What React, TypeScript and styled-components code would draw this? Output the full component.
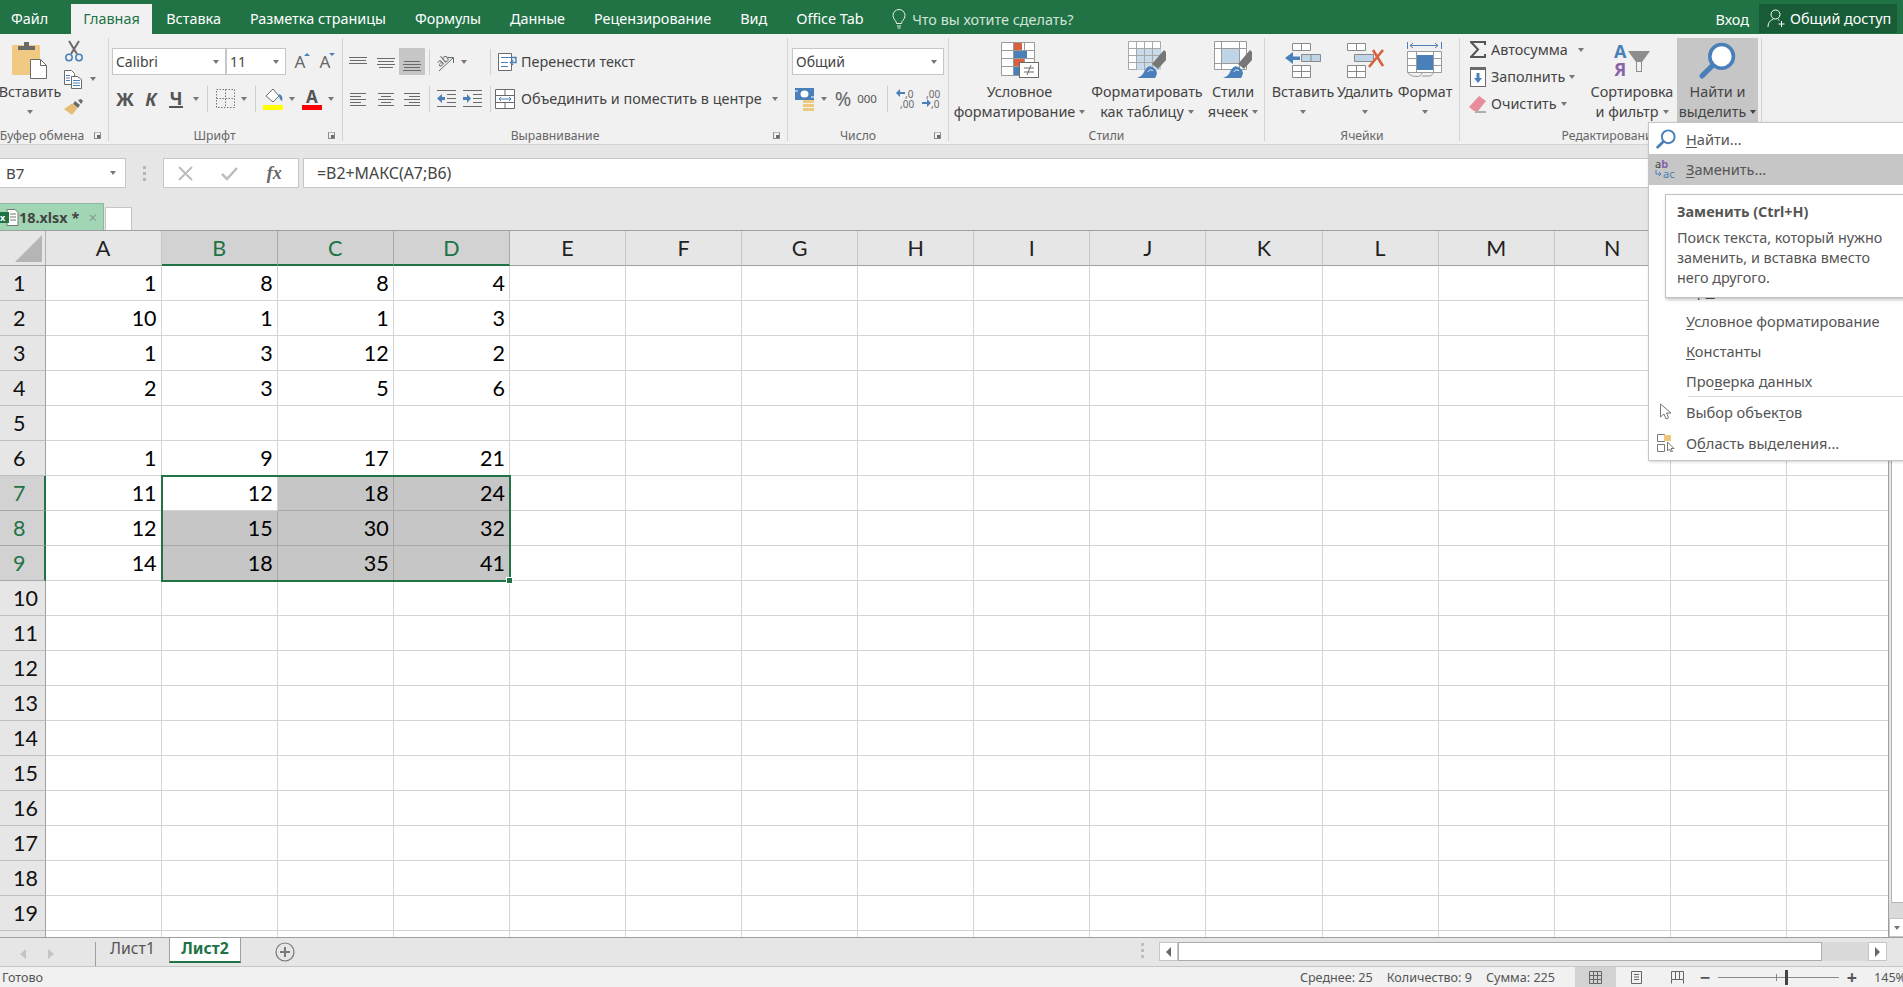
import React from 'react';
import styled, { createGlobalStyle } from 'styled-components';

const UI_FONT = '"Noto Sans", "Open Sans", sans-serif';
const CELL_FONT = 'Lato, "Noto Sans", sans-serif';
const GREEN = '#217346';
const GRAY = '#6a6a6a';
const BLUE = '#4a80b9';
const PALE = '#c0d4e8';
const RED = '#d8603f';
const COL_W = 116.1;
const ROW_W = 45.5;
const ROW_H = 35;

const GlobalStyle = createGlobalStyle`
  html, body {
    margin: 0;
    padding: 0;
    overflow: hidden;
    background: #fff;
  }
`;

const Window = styled.div`
  position: relative;
  width: 1903px;
  height: 987px;
  overflow: hidden;
  display: flex;
  flex-direction: column;
  font-family: ${UI_FONT};
  font-size: 14.4px;
  color: #444;
`;

/* top green strip */
const TitleBar = styled.div`
  height: 34px;
  flex: none;
  background: ${GREEN};
  display: flex;
  align-items: flex-end;
  color: #fff;
`;

const MenuTab = styled.div<{ $active?: boolean; $first?: boolean }>`
  height: 30px;
  line-height: 29px;
  padding: ${(p) => (p.$first ? '0 23px 0 11px' : p.$active ? '0 12px' : '0 14.5px')};
  background: ${(p) => (p.$active ? '#f1f1f1' : 'transparent')};
  color: ${(p) => (p.$active ? GREEN : '#fff')};
`;

const TellMe = styled.div`
  display: flex;
  align-items: center;
  gap: 6px;
  height: 30px;
  margin-left: 14px;
  color: #d3e3da;
`;

const TitleRight = styled.div`
  margin-left: auto;
  display: flex;
  align-items: flex-end;
  padding-right: 6px;
`;

const SignIn = styled.div`
  height: 29px;
  line-height: 30px;
  margin-right: 10px;
`;

const ShareButton = styled.div`
  width: 138px;
  height: 29px;
  margin-bottom: 1px;
  background: #185c37;
  display: flex;
  align-items: center;
  gap: 4px;
  padding-left: 8px;
  box-sizing: border-box;
`;

/* ribbon */
const Ribbon = styled.div`
  height: 111px;
  flex: none;
  box-sizing: border-box;
  background: #f1f1f1;
  border-bottom: 1px solid #d4d4d4;
  padding-top: 4px;
  display: flex;
  align-items: flex-start;
`;

const Group = styled.div<{ $w: number }>`
  width: ${(p) => p.$w}px;
  height: 103px;
  flex: none;
  box-sizing: border-box;
  border-right: 1px solid #d4d4d4;
  display: flex;
  flex-direction: column;
  position: relative;
`;

const GroupBody = styled.div<{ $pad?: number }>`
  height: 86px;
  display: flex;
  padding-left: ${(p) => p.$pad ?? 0}px;
`;

const GroupLabel = styled.div<{ $shift?: number }>`
  height: 17px;
  line-height: 24px;
  text-align: center;
  font-size: 12.2px;
  color: #666;
  white-space: nowrap;
  margin-left: ${(p) => p.$shift ?? 0}px;
`;

const Launcher = styled.div`
  position: absolute;
  right: 7px;
  bottom: 2px;
  width: 7px;
  height: 7px;
  border: 1px solid #8a8a8a;
  border-top-color: #b8b8b8;
  box-sizing: border-box;

  &::after {
    content: '';
    position: absolute;
    right: 0;
    bottom: 0;
    width: 3px;
    height: 3px;
    background: #6a6a6a;
  }
`;

const ToolStack = styled.div`
  display: flex;
  flex-direction: column;
  gap: 10px;
  padding-top: 10px;
`;

const ToolRow = styled.div`
  height: 27px;
  display: flex;
  align-items: center;
`;

const Slot = styled.div<{ $w: number; $on?: boolean }>`
  width: ${(p) => p.$w}px;
  height: 27px;
  flex: none;
  display: flex;
  align-items: center;
  justify-content: center;
  background: ${(p) => (p.$on ? '#c6c6c6' : 'transparent')};
`;

const Caret = styled.span<{ $dark?: boolean; $left?: number }>`
  display: inline-block;
  width: 0;
  height: 0;
  flex: none;
  margin-left: ${(p) => p.$left ?? 0}px;
  border-left: 3.5px solid transparent;
  border-right: 3.5px solid transparent;
  border-top: 4px solid ${(p) => (p.$dark ? '#444' : '#777')};
`;

const VRule = styled.div<{ $l: number; $r: number }>`
  width: 1px;
  height: 26px;
  flex: none;
  background: #d0d0d0;
  margin: 0 ${(p) => p.$r}px 0 ${(p) => p.$l}px;
`;

const Select = styled.div<{ $w: number }>`
  width: ${(p) => p.$w}px;
  height: 27px;
  flex: none;
  box-sizing: border-box;
  background: #fff;
  border: 1px solid #c6c6c6;
  display: flex;
  align-items: center;
  justify-content: space-between;
  padding: 0 6px 0 3px;
  font-size: 14px;
`;

const FontMark = styled.span<{ $italic?: boolean; $under?: boolean }>`
  font-weight: 700;
  font-size: 18px;
  font-style: ${(p) => (p.$italic ? 'italic' : 'normal')};
  color: #555;
  border-bottom: ${(p) => (p.$under ? '2px solid #555' : 'none')};
  line-height: 16px;
  padding: 0 1px;
`;

const GrowMark = styled.span`
  position: relative;
  font-size: 17px;
  color: #666;
  line-height: 20px;
`;

const PercentMark = styled.span`
  font-size: 20px;
  color: #666;
`;

const ThousandsMark = styled.span`
  font-size: 11.5px;
  color: #555;
`;

const GrowArrow = styled.span<{ $down?: boolean }>`
  position: absolute;
  top: 1px;
  right: -5px;
  width: 0;
  height: 0;
  border-left: 3px solid transparent;
  border-right: 3px solid transparent;
  border-top: ${(p) => (p.$down ? `3px solid ${BLUE}` : 'none')};
  border-bottom: ${(p) => (p.$down ? 'none' : `3px solid ${BLUE}`)};
`;

const ColorMark = styled.span<{ $bar: string }>`
  width: 20px;
  display: block;
  text-align: center;
  font-size: 17px;
  font-weight: 700;
  color: #555;
  line-height: 17px;
  border-bottom: 5px solid ${(p) => p.$bar};
`;

const TextTool = styled.div<{ $pad?: number }>`
  display: flex;
  align-items: center;
  gap: 3px;
  white-space: nowrap;
  padding-left: ${(p) => p.$pad ?? 0}px;
`;

const BigButton = styled.div<{ $w: number; $on?: boolean }>`
  width: ${(p) => p.$w}px;
  height: 84px;
  flex: none;
  display: flex;
  flex-direction: column;
  align-items: center;
  background: ${(p) => (p.$on ? '#c6c6c6' : 'transparent')};
  white-space: nowrap;
`;

const BigIcon = styled.div`
  height: 45px;
  display: flex;
  align-items: center;
  justify-content: center;
`;

const BigLine = styled.div`
  height: 20px;
  line-height: 20px;
  display: flex;
  align-items: center;
  gap: 4px;
`;

const SideColumn = styled.div`
  width: 42px;
  flex: none;
  margin-left: 4px;
  display: flex;
  flex-direction: column;
  padding-top: 1px;
  gap: 4px;
`;

const SideTool = styled.div`
  height: 24px;
  display: flex;
  align-items: center;
  gap: 8px;
`;

const EditColumn = styled.div`
  width: 127px;
  flex: none;
  display: flex;
  flex-direction: column;
  margin-top: -2px;
  padding-left: 9px;
  box-sizing: border-box;
`;

const EditRow = styled.div`
  height: 27px;
  display: flex;
  align-items: center;
  gap: 4px;
  white-space: nowrap;
`;

const EditIcon = styled.span`
  width: 18px;
  display: flex;
  justify-content: center;
`;

/* formula row */
const FormulaBar = styled.div`
  height: 58px;
  flex: none;
  box-sizing: border-box;
  background: #e6e6e6;
  padding-top: 13px;
  display: flex;
  align-items: flex-start;
`;

const NameBox = styled.div`
  width: 127px;
  height: 30px;
  margin-left: -1px;
  flex: none;
  box-sizing: border-box;
  background: #fff;
  border: 1px solid #c6c6c6;
  display: flex;
  align-items: center;
  justify-content: space-between;
  padding: 0 9px 0 6px;
  font-size: 15px;
`;

const GripDots = styled.div`
  width: 37px;
  height: 30px;
  flex: none;
  display: flex;
  flex-direction: column;
  align-items: center;
  justify-content: center;
  gap: 3px;

  span {
    width: 3px;
    height: 3px;
    background: #b5b5b5;
  }
`;

const FormulaButtons = styled.div`
  width: 136px;
  height: 30px;
  flex: none;
  box-sizing: border-box;
  background: #fff;
  border: 1px solid #c6c6c6;
  display: flex;
  align-items: center;
  justify-content: space-around;
  padding: 0 2px 0 0;
`;

const FxMark = styled.span`
  font-family: 'Liberation Serif', serif;
  font-style: italic;
  font-weight: 700;
  font-size: 18px;
  color: #666;
`;

const FormulaInput = styled.div`
  flex: 1;
  height: 30px;
  margin-left: 4px;
  box-sizing: border-box;
  background: #fff;
  border: 1px solid #c6c6c6;
  border-right: 0;
  line-height: 28px;
  padding-left: 13px;
  font-size: 15.9px;
`;

/* workbook tabs */
const BookBar = styled.div`
  height: 28px;
  flex: none;
  box-sizing: border-box;
  background: #e6e6e6;
  border-bottom: 1px solid #9f9f9f;
  display: flex;
  align-items: flex-end;
`;

const BookTab = styled.div`
  width: 104px;
  height: 27px;
  flex: none;
  box-sizing: border-box;
  background: #a0d6b4;
  border: 1px solid #8fb8a0;
  border-left: 0;
  border-bottom: 0;
  display: flex;
  align-items: center;
  overflow: hidden;
  font-weight: 700;
  font-size: 14.4px;
  color: #444;
`;

const BookClose = styled.span`
  margin-left: auto;
  margin-right: 6px;
  font-weight: 400;
  font-size: 15px;
  color: #8c9a91;
`;

const NewBook = styled.div`
  width: 27px;
  height: 23px;
  margin-left: 1px;
  flex: none;
  box-sizing: border-box;
  background: #fff;
  border: 1px solid #c6c6c6;
  border-bottom: 0;
`;

/* sheet */
const SheetArea = styled.div`
  flex: 1;
  min-height: 0;
  display: flex;
`;

const GridViewport = styled.div`
  position: relative;
  flex: 1;
  overflow: hidden;
`;

const SheetGrid = styled.div`
  display: grid;
  grid-template-columns: ${ROW_W}px repeat(16, ${COL_W}px);
  grid-auto-rows: ${ROW_H}px;
`;

const Corner = styled.div`
  background: #e6e6e6;
  border-right: 1px solid #b0b0b0;
  border-bottom: 1px solid #9f9f9f;
  box-sizing: border-box;
  position: relative;

  &::after {
    content: '';
    position: absolute;
    right: 3px;
    bottom: 3px;
    width: 0;
    height: 0;
    border-left: 27px solid transparent;
    border-bottom: 27px solid #b5b5b5;
  }
`;

const ColHead = styled.div<{ $on: boolean }>`
  box-sizing: border-box;
  background: ${(p) => (p.$on ? '#d2d2d2' : '#e6e6e6')};
  border-right: 1px solid ${(p) => (p.$on ? '#a8a8a8' : '#c6c6c6')};
  border-bottom: ${(p) => (p.$on ? `2px solid ${GREEN}` : '1px solid #9f9f9f')};
  color: ${(p) => (p.$on ? GREEN : '#222')};
  font-family: ${CELL_FONT};
  font-size: 21.5px;
  display: flex;
  align-items: center;
  justify-content: center;
`;

const RowHead = styled.div<{ $on: boolean }>`
  box-sizing: border-box;
  background: ${(p) => (p.$on ? '#d2d2d2' : '#e6e6e6')};
  border-right: ${(p) => (p.$on ? `2px solid ${GREEN}` : '1px solid #9f9f9f')};
  border-bottom: 1px solid ${(p) => (p.$on ? '#a8a8a8' : '#c0c0c0')};
  color: ${(p) => (p.$on ? GREEN : '#111')};
  font-family: ${CELL_FONT};
  font-size: 21.5px;
  display: flex;
  align-items: center;
  padding-left: 13px;
`;

const Cell = styled.div<{ $fill: boolean }>`
  box-sizing: border-box;
  background: ${(p) => (p.$fill ? '#c6c6c6' : '#fff')};
  border-right: 1px solid ${(p) => (p.$fill ? '#a8a8a8' : '#d4d4d4')};
  border-bottom: 1px solid ${(p) => (p.$fill ? '#a8a8a8' : '#d4d4d4')};
  color: #000;
  font-family: ${CELL_FONT};
  font-size: 21.5px;
  display: flex;
  align-items: center;
  justify-content: flex-end;
  padding-right: 4px;
`;

const Selection = styled.div`
  position: absolute;
  left: ${ROW_W + COL_W - 1}px;
  top: ${ROW_H * 7 - 1}px;
  width: ${COL_W * 3 + 2}px;
  height: ${ROW_H * 3 + 2}px;
  box-sizing: border-box;
  border: 2px solid ${GREEN};
  pointer-events: none;

  &::after {
    content: '';
    position: absolute;
    right: -4px;
    bottom: -4px;
    width: 5px;
    height: 5px;
    background: ${GREEN};
    border: 1px solid #fff;
  }
`;

const VScroll = styled.div`
  width: 15px;
  flex: none;
  display: flex;
  flex-direction: column;
  background: #e6e6e6;
  border-left: 1px solid #9f9f9f;
  box-sizing: border-box;
`;

const VThumb = styled.div`
  flex: 1;
  margin: 0 0 0 2px;
  background: #fff;
  border: 1px solid #b5b5b5;
  border-right: 0;
`;

const VTrack = styled.div`
  height: 15px;
  background: #dadada;
`;

const VButton = styled.div`
  height: 17px;
  background: #fff;
  border: 1px solid #c6c6c6;
  border-right: 0;
  display: flex;
  align-items: center;
  justify-content: center;
`;

/* sheet tabs */
const SheetBar = styled.div`
  height: 29px;
  flex: none;
  box-sizing: border-box;
  background: #e6e6e6;
  border-top: 1px solid #9f9f9f;
  display: flex;
  align-items: flex-start;
`;

const NavArrows = styled.div`
  width: 96px;
  height: 24px;
  margin-top: 4px;
  box-sizing: border-box;
  border-right: 1px solid #9f9f9f;
  flex: none;
  display: flex;
  align-items: center;
  gap: 22px;
  padding-left: 20px;
`;

const NavArrow = styled.span<{ $right?: boolean }>`
  width: 0;
  height: 0;
  border-top: 5px solid transparent;
  border-bottom: 5px solid transparent;
  border-left: ${(p) => (p.$right ? '6px solid #c4c4c4' : 'none')};
  border-right: ${(p) => (p.$right ? 'none' : '6px solid #c4c4c4')};
`;

const SheetTab = styled.div<{ $active?: boolean }>`
  height: 25px;
  line-height: 21px;
  width: ${(p) => (p.$active ? 72 : 73)}px;
  flex: none;
  box-sizing: border-box;
  text-align: center;
  font-size: 15.8px;
  font-weight: ${(p) => (p.$active ? 700 : 400)};
  color: ${(p) => (p.$active ? GREEN : '#555')};
  background: ${(p) => (p.$active ? '#fff' : 'transparent')};
  border-left: ${(p) => (p.$active ? '1px solid #9f9f9f' : 'none')};
  border-right: ${(p) => (p.$active ? '1px solid #9f9f9f' : 'none')};
  border-bottom: ${(p) => (p.$active ? `2px solid ${GREEN}` : 'none')};
`;

const AddSheet = styled.div`
  width: 20px;
  height: 20px;
  margin: 4px 0 0 34px;
  flex: none;
  display: flex;
`;

const ScrollDots = styled.div`
  margin: 0 9px 0 839px;
  width: 16px;
  height: 24px;
  flex: none;
  display: flex;
  flex-direction: column;
  align-items: center;
  justify-content: center;
  gap: 3px;

  span {
    width: 3px;
    height: 3px;
    background: #bdbdbd;
  }
`;

const HScroll = styled.div`
  width: 728px;
  height: 19px;
  margin: 4px 0 0 0;
  flex: none;
  display: flex;
  background: #d9d9d9;
`;

const HButton = styled.div<{ $end?: boolean }>`
  width: 19px;
  flex: none;
  box-sizing: border-box;
  background: #fff;
  border: 1px solid #c6c6c6;
  display: flex;
  align-items: center;
  justify-content: center;
  margin-left: ${(p) => (p.$end ? 'auto' : 0)};
`;

const HThumb = styled.div`
  width: 644px;
  flex: none;
  box-sizing: border-box;
  background: #fff;
  border: 1px solid #ababab;
`;

const ScrollArrow = styled.span<{ $right?: boolean }>`
  width: 0;
  height: 0;
  border-top: 5px solid transparent;
  border-bottom: 5px solid transparent;
  border-left: ${(p) => (p.$right ? '5px solid #666' : 'none')};
  border-right: ${(p) => (p.$right ? 'none' : '5px solid #666')};
`;

/* status bar */
const StatusBar = styled.div`
  height: 21px;
  flex: none;
  box-sizing: border-box;
  background: #f1f1f1;
  border-top: 1px solid #c6c6c6;
  display: flex;
  align-items: center;
  font-size: 12.6px;
  color: #555;
  white-space: nowrap;
`;

const StatusText = styled.div`
  padding: 1px 0 0 2px;
`;

const StatusStats = styled.div`
  margin-left: auto;
  display: flex;
  gap: 14px;
  margin-right: 20px;
  padding-top: 1px;
`;

const StatusRight = styled.div`
  width: 328px;
  height: 20px;
  flex: none;
  display: flex;
  align-items: center;
  overflow: hidden;
`;

const ViewButton = styled.div<{ $on?: boolean }>`
  width: 41px;
  height: 20px;
  flex: none;
  display: flex;
  align-items: center;
  justify-content: center;
  background: ${(p) => (p.$on ? '#d2d2d2' : 'transparent')};
`;

const ZoomTrack = styled.div`
  position: relative;
  width: 121px;
  height: 1px;
  margin: 0 6px;
  background: #8a8a8a;
  flex: none;
`;

const ZoomMark = styled.span<{ $thumb?: boolean; $x: number }>`
  position: absolute;
  left: ${(p) => p.$x}px;
  top: ${(p) => (p.$thumb ? -7 : -3)}px;
  width: ${(p) => (p.$thumb ? 3 : 1)}px;
  height: ${(p) => (p.$thumb ? 15 : 7)}px;
  background: ${(p) => (p.$thumb ? '#444' : '#8a8a8a')};
`;

const ZoomSign = styled.span`
  width: 14px;
  flex: none;
  font-size: 18px;
  line-height: 18px;
  text-align: center;
  color: #555;
  font-weight: 700;
`;

const ZoomValue = styled.span`
  margin-left: 15px;
`;

/* open menu and its hint */
const FindMenu = styled.div`
  position: absolute;
  left: 1648px;
  top: 122px;
  width: 300px;
  box-sizing: border-box;
  padding: 1px 0 2px;
  background: #fff;
  border: 1px solid #c6c6c6;
  box-shadow: 1px 1px 3px rgba(0, 0, 0, 0.18);
`;

const MenuRow = styled.div<{ $on?: boolean }>`
  height: 30.25px;
  display: flex;
  align-items: center;
  background: ${(p) => (p.$on ? '#c6c6c6' : 'transparent')};
  white-space: nowrap;
  font-size: 14.6px;
  color: #555;
`;

const MenuIcon = styled.span`
  width: 37px;
  flex: none;
  display: flex;
  justify-content: center;
  padding-right: 4px;
  box-sizing: border-box;
`;

const Key = styled.span`
  text-decoration: underline;
  text-underline-offset: 2px;
`;

const MenuRule = styled.div`
  height: 1px;
  margin-left: 39px;
  background: #d8d8d8;
`;

const Hint = styled.div`
  position: absolute;
  left: 1665px;
  top: 194px;
  width: 300px;
  height: 104px;
  box-sizing: border-box;
  background: #fff;
  border: 1px solid #c0c0c0;
  box-shadow: 1px 2px 3px rgba(0, 0, 0, 0.22);
  padding: 7px 0 0 11px;
`;

const HintTitle = styled.div`
  font-weight: 700;
  font-size: 14.4px;
  line-height: 20px;
  color: #555;
  margin-bottom: 6px;
`;

const HintLine = styled.div`
  font-size: 14.4px;
  line-height: 20px;
  color: #555;
`;

/* drawings */
const PasteIcon = () => (
  <svg width="36" height="39" viewBox="0 0 36 39">
    <rect x="0" y="4" width="28" height="30" rx="1" fill="#f0c983" />
    <path d="M6 9V5h6V1h5v4h6v4z" fill={GRAY} />
    <path d="M18.5 18.5h10l6 6v13h-16z" fill="#fff" stroke={GRAY} />
    <path d="M28.5 18.5v6h6" fill="none" stroke={GRAY} />
  </svg>
);

const CutIcon = () => (
  <svg width="20" height="22" viewBox="0 0 20 22">
    <path d="M5 1l8 13M15 1L7 14" stroke={GRAY} strokeWidth="2" fill="none" />
    <circle cx="5" cy="17.5" r="3.2" fill="none" stroke={BLUE} strokeWidth="1.5" />
    <circle cx="15" cy="17.5" r="3.2" fill="none" stroke={BLUE} strokeWidth="1.5" />
  </svg>
);

const CopyIcon = () => (
  <svg width="18" height="19" viewBox="0 0 18 19">
    <path d="M.5.5h7l3 3v11H.5z" fill="#fff" stroke={GRAY} />
    <path d="M7.5 6.5h6l4 3v9h-10z" fill="#fff" stroke={GRAY} />
    <path d="M9 10.5h7M9 13h7M9 15.5h7" stroke={BLUE} />
    <path d="M2 5.5h4M2 8h4M2 10.5h4" stroke={BLUE} />
  </svg>
);

const BrushIcon = () => (
  <svg width="19" height="17" viewBox="0 0 19 17">
    <path d="M11 2l5 4-2 3-5-4z" fill={GRAY} />
    <path d="M14 1l3-1 2 2-2 3z" fill={GRAY} />
    <path d="M8 4.5l5.5 4.500L8 16 0 10z" fill="#e7bd74" />
  </svg>
);

const BorderIcon = () => (
  <svg width="19" height="19" viewBox="0 0 19 19">
    <path d="M.5.5h18v18H.5zM9.5.5v18M.5 9.500h18" fill="none" stroke="#777" strokeDasharray="1.5 1.5" />
  </svg>
);

const FillIcon = () => (
  <svg width="21" height="23" viewBox="0 0 21 23">
    <path d="M3 9l7-7 6 7-6 6z" fill="#fff" stroke={GRAY} />
    <path d="M16 7c3 1 4 4 3 7-2-1-3-3-3-7z" fill={BLUE} />
    <rect x="0" y="18" width="20" height="5" fill="#ffff00" />
  </svg>
);

const Lines = ({ rows, w = 18 }: { rows: [number, number, number][]; w?: number }) => (
  <svg width={w} height="18" viewBox={`0 0 ${w} 18`}>
    {rows.map(([a, b, y]) => (
      <line key={`${a}-${y}`} x1={a} x2={b} y1={y + 0.5} y2={y + 0.5} stroke={GRAY} />
    ))}
  </svg>
);

const OrientIcon = () => (
  <svg width="18" height="20" viewBox="0 0 18 20">
    <text x="0" y="13" fontFamily={UI_FONT} fontSize="11" fill={GRAY} transform="rotate(-40 5 10)">ab</text>
    <path d="M2 19L16 6M11 5.5h5.5V11" fill="none" stroke={GRAY} />
  </svg>
);

const WrapIcon = () => (
  <svg width="20" height="20" viewBox="0 0 20 20">
    <path d="M.5 1.5h13v17H.5z" fill="#fff" stroke={GRAY} />
    <path d="M3 5.5h13M3 10.5h7M3 14.5h7" stroke={BLUE} />
    <path d="M14 5.5h4v5h-5M15 8l-2.5 2.5L15 13" fill="none" stroke={BLUE} strokeWidth="1.4" />
  </svg>
);

const IndentIcon = ({ flip }: { flip?: boolean }) => (
  <svg width="20" height="19" viewBox="0 0 20 19">
    <path d="M1 1.5h19M11 5.5h9M11 9.5h9M11 13.5h9M1 17.5h19" stroke={GRAY} />
    {flip
      ? <path d="M1 8h4V5l4 4.5L5 14v-3H1z" fill={BLUE} />
      : <path d="M9 8H6V5L1 9.5 6 14v-3h3z" fill={BLUE} />}
  </svg>
);

const MergeIcon = () => (
  <svg width="20" height="20" viewBox="0 0 20 20">
    <path d="M.5.5h19v19H.5zM.5 6.5h19M.5 13.5h19M10 .5v6M10 13.5v6" fill="#fff" stroke={GRAY} />
    <rect x="1" y="7" width="18" height="6" fill="#fff" />
    <path d="M4 10h12M6 8l-2 2 2 2M14 8l2 2-2 2" fill="none" stroke={BLUE} />
  </svg>
);

const CurrencyIcon = () => (
  <svg width="21" height="24" viewBox="0 0 21 24">
    <rect x="0" y="1" width="19" height="12" fill={BLUE} />
    <ellipse cx="9.5" cy="7" rx="4" ry="3.5" fill="#fff" />
    <path d="M0 4h3M16 10h3" stroke="#fff" />
    <rect x="8" y="13" width="11" height="3" fill="#edc87e" />
    <rect x="8" y="17" width="11" height="3" fill="#edc87e" />
    <rect x="8" y="21" width="11" height="3" fill="#edc87e" />
  </svg>
);

const DecimalIcon = ({ more }: { more?: boolean }) => (
  <svg width="19" height="20" viewBox="0 0 19 20">
    <text x={more ? 4 : 9} y="9" fontFamily={UI_FONT} fontSize="10" fill={GRAY}>{more ? ',00' : ',0'}</text>
    <text x={more ? 9 : 4} y="19" fontFamily={UI_FONT} fontSize="10" fill={GRAY}>{more ? ',0' : ',00'}</text>
    {more
      ? <path d="M0 13h5v-3l4 4-4 4v-3H0z" fill={BLUE} />
      : <path d="M9 3H4V0L0 4l4 4V5h5z" fill={BLUE} />}
  </svg>
);

const CondIcon = () => (
  <svg width="38" height="36" viewBox="0 0 38 36">
    <path d="M.5.5h33v33H.5zM.5 8.5h33M.5 16.5h33M.5 24.5h33M12.5.5v33M23.5.5v33" fill="#fff" stroke="#9a9a9a" />
    <rect x="13" y="1" width="8" height="7" fill={RED} />
    <rect x="13" y="9" width="13" height="7" fill={BLUE} />
    <rect x="13" y="17" width="10" height="7" fill={RED} />
    <rect x="13" y="25" width="7" height="8" fill={BLUE} />
    <rect x="18.5" y="20.5" width="19" height="15" fill="#fff" stroke={GRAY} />
    <path d="M23 26h10M23 30h10M30 23l-4 10" stroke={GRAY} />
  </svg>
);

const TableBrushIcon = ({ cells }: { cells?: boolean }) => (
  <svg width="38" height="38" viewBox="0 0 38 38">
    {cells ? (
      <>
        <path d="M.5.5h32v28H.5zM.5 7.5h32M7.5.5v28M25.5.5v28M.5 22.5h32" fill="#fff" stroke="#9a9a9a" />
        <rect x="8" y="8" width="17" height="14" fill={PALE} />
      </>
    ) : (
      <>
        <path d="M.5.5h32v28H.5zM.5 7.5h32M.5 14.5h32M.5 21.5h32M8.5.5v28M16.5.5v28M24.5.5v28" fill="#fff" stroke="#a8a8a8" />
        <path d="M9 8h24v21H9z" fill={PALE} opacity="0.85" />
        <path d="M9 14.5h24M9 21.5h24M16.5 8v21M24.5 8v21" stroke="#a8a8a8" />
      </>
    )}
    <path d="M24 23l12-14 2 2v8l-8 9z" fill="#777" />
    <path d="M27 28c-6-6-9-1-11 3-1 3-4 5-7 6h18c2-3 3-6 0-9z" fill={BLUE} />
    <path d="M20 31c1-2 3-3 5-1" stroke="#fff" fill="none" />
  </svg>
);

const InsertIcon = () => (
  <svg width="37" height="35" viewBox="0 0 37 35">
    <path d="M7.5.5h18v7h-18zM16.5.5v7M7.5 22.5h18v12h-18zM16.5 22.5v12M7.5 28.5h18" fill="#fff" stroke="#8a8a8a" />
    <path d="M16.5 11.5h19v7h-19zM26 11.5v7" fill={PALE} stroke="#8a8a8a" />
    <path d="M15 13.5H8V9l-8 6 8 6v-4h7z" fill={BLUE} />
  </svg>
);

const DeleteIcon = () => (
  <svg width="37" height="35" viewBox="0 0 37 35">
    <path d="M.5.5h18v7H.5zM9.5.5v7M.5 22.5h18v12H.5zM9.5 22.5v12M.5 28.5h18" fill="#fff" stroke="#8a8a8a" />
    <path d="M7.5 11.5h19v7h-19z" fill={PALE} stroke="#8a8a8a" />
    <path d="M26 7l10 16M36 7L22 24" stroke={RED} strokeWidth="2.6" fill="none" />
  </svg>
);

const FormatIcon = () => (
  <svg width="36" height="36" viewBox="0 0 36 36">
    <path d="M.5 0v7M34.5 0v7M3 3.5h28M6 1L3 3.5 6 6M28 1l3 2.5L28 6" stroke={BLUE} fill="none" />
    <path d="M.5 9.5h34v21H.5zM.5 16.5h34M.5 23.5h34M9.5 9.5v21M26.5 9.5v21" fill="#fff" stroke="#9a9a9a" />
    <rect x="10" y="13" width="16" height="15" fill={BLUE} />
    <path d="M.5 30.5c3 4 7 4 11 4 3-1 3-3 4-4M15 34h8c2-1 3-2 4-3.5" fill="none" stroke="#9a9a9a" />
  </svg>
);

const SigmaIcon = () => (
  <svg width="16" height="17" viewBox="0 0 16 17">
    <path d="M15 4V1H1l7 7.5L1 16h14v-3" fill="none" stroke="#555" strokeWidth="2" />
  </svg>
);

const FillDownIcon = () => (
  <svg width="16" height="20" viewBox="0 0 16 20">
    <rect x=".5" y="1.5" width="15" height="18" fill="#fff" stroke={GRAY} />
    <rect x="0" y="0" width="16" height="3" fill={GRAY} />
    <path d="M6.5 6h3v5H12l-4 5-4-5h2.5z" fill={BLUE} />
  </svg>
);

const EraserIcon = () => (
  <svg width="18" height="18" viewBox="0 0 18 18">
    <path d="M10 1l7 5-8 10H5L0 12z" fill="#ea8d9b" />
    <path d="M6 17h11" stroke={GRAY} />
  </svg>
);

const SortIcon = () => (
  <svg width="38" height="37" viewBox="0 0 38 37">
    <text x="1" y="16" fontFamily={UI_FONT} fontSize="18" fontWeight="700" fill={BLUE}>A</text>
    <text x="1" y="34" fontFamily={UI_FONT} fontSize="18" fontWeight="700" fill="#8a63ab">Я</text>
    <path d="M15 9h22l-8 11v10h-6V20z" fill="#8d8d8d" />
    <path d="M24 20h4v9h-4z" fill="#f1f1f1" />
  </svg>
);

const Magnifier = ({ size }: { size: number }) => (
  <svg width={size} height={size} viewBox="0 0 36 36">
    <circle cx="22" cy="14" r="11.5" fill="#fff" stroke={BLUE} strokeWidth="3.5" />
    <path d="M13 23L3 33" stroke={BLUE} strokeWidth="5" strokeLinecap="round" />
  </svg>
);

const ReplaceIcon = () => (
  <svg width="22" height="20" viewBox="0 0 22 20">
    <text x="0" y="9" fontFamily={UI_FONT} fontSize="11" fill="#444">a<tspan fill="#8a63ab" fontWeight="700">b</tspan></text>
    <path d="M1 11v4h5M4 13l2 2-2 2" fill="none" stroke={BLUE} />
    <text x="8" y="19" fontFamily={UI_FONT} fontSize="11" fill={BLUE}>ac</text>
  </svg>
);

const PointerIcon = () => (
  <svg width="14" height="18" viewBox="0 0 14 18">
    <path d="M1.5 1v13l3.5-3 2 5 2.5-1-2-5h4.5z" fill="#fff" stroke="#777" />
  </svg>
);

const PaneIcon = () => (
  <svg width="18" height="18" viewBox="0 0 18 18">
    <path d="M.5.5h7v7h-7zM.5 10.5h7v7h-7z" fill="#fff" stroke="#777" />
    <rect x="7" y="1" width="7" height="6" fill="#edc87e" />
    <path d="M10.5 8v9l2-2 1.5 3 1.5-.5-1.5-3h3z" fill="#fff" stroke="#777" />
  </svg>
);

const BulbIcon = () => (
  <svg width="14" height="20" viewBox="0 0 14 20" fill="none" stroke="#e8f0ea">
    <path d="M4.5 14.5c0-3-3.5-4-3.5-8a6 6 0 0 1 12 0c0 4-3.5 5-3.5 8z" />
    <path d="M5 17h4M5.5 19h3" />
  </svg>
);

const ShareIcon = () => (
  <svg width="19" height="19" viewBox="0 0 19 19" fill="none" stroke="#fff">
    <circle cx="8.5" cy="5.5" r="4.5" />
    <path d="M1 18c0-5 3-7 5.5-8M11 10.5l1.5.8M14.5 12v6M11.5 15h6" />
  </svg>
);

const ExcelMark = () => (
  <svg width="19" height="19" viewBox="0 0 19 19">
    <path d="M7 1.5h8l3 3v13H7z" fill="#fff" stroke="#777" />
    <path d="M10 6h6M10 9h6M10 12h6" stroke="#777" />
    <rect x="-2" y="4" width="11" height="11" fill={GREEN} />
    <text x="0" y="13" fontFamily={UI_FONT} fontSize="9" fontWeight="700" fill="#fff">x</text>
  </svg>
);

const AddIcon = () => (
  <svg width="20" height="20" viewBox="0 0 20 20" fill="none" stroke="#777">
    <circle cx="10" cy="10" r="9" strokeWidth="1.2" />
    <path d="M10 5v10M5 10h10" strokeWidth="2" />
  </svg>
);

const CrossIcon = () => (
  <svg width="15" height="15" viewBox="0 0 15 15">
    <path d="M1 1l13 13M14 1L1 14" stroke="#bdbdbd" strokeWidth="2" />
  </svg>
);

const CheckIcon = () => (
  <svg width="17" height="15" viewBox="0 0 17 15">
    <path d="M1 8l5 5L16 2" stroke="#bdbdbd" strokeWidth="2.5" fill="none" />
  </svg>
);

const NormalViewIcon = () => (
  <svg width="13" height="13" viewBox="0 0 13 13">
    <path d="M.5.5h12v12H.5zM4.5.5v12M8.5.5v12M.5 4.5h12M.5 8.5h12" fill="none" stroke="#666" />
  </svg>
);

const PageViewIcon = () => (
  <svg width="11" height="13" viewBox="0 0 11 13">
    <path d="M.5.5h10v12H.5z" fill="none" stroke="#666" />
    <path d="M3 3.5h5M3 6h5M3 8.5h5" stroke="#666" />
  </svg>
);

const BreakViewIcon = () => (
  <svg width="13" height="13" viewBox="0 0 13 13">
    <path d="M.5.5h12v8H.5zM4.5.5v8M8.5.5v8M.5 8.5v4M12.5 8.5v4" fill="none" stroke="#666" />
  </svg>
);

const tabs = ['Вставка', 'Разметка страницы', 'Формулы', 'Данные', 'Рецензирование', 'Вид', 'Office Tab'];
const columns = 'ABCDEFGHIJKLMNOP'.split('');
const sheetData: number[][] = [
  [1, 8, 8, 4],
  [10, 1, 1, 3],
  [1, 3, 12, 2],
  [2, 3, 5, 6],
  [],
  [1, 9, 17, 21],
  [11, 12, 18, 24],
  [12, 15, 30, 32],
  [14, 18, 35, 41],
];

const App = () => (
  <Window>
    <GlobalStyle />
    <TitleBar>
      <MenuTab $first>Файл</MenuTab>
      <MenuTab $active>Главная</MenuTab>
      {tabs.map((t) => <MenuTab key={t}>{t}</MenuTab>)}
      <TellMe><BulbIcon />Что вы хотите сделать?</TellMe>
      <TitleRight>
        <SignIn>Вход</SignIn>
        <ShareButton><ShareIcon />Общий доступ</ShareButton>
      </TitleRight>
    </TitleBar>

    <Ribbon>
      <Group $w={109}>
        <GroupBody>
          <BigButton $w={60}>
            <BigIcon><PasteIcon /></BigIcon>
            <BigLine>Вставить</BigLine>
            <BigLine><Caret /></BigLine>
          </BigButton>
          <SideColumn>
            <SideTool><CutIcon /></SideTool>
            <SideTool><CopyIcon /><Caret /></SideTool>
            <SideTool><BrushIcon /></SideTool>
          </SideColumn>
        </GroupBody>
        <GroupLabel $shift={-24}>Буфер обмена</GroupLabel>
        <Launcher />
      </Group>

      <Group $w={234}>
        <GroupBody $pad={3}>
          <ToolStack>
            <ToolRow>
              <Select $w={114}>Calibri<Caret /></Select>
              <Select $w={60}>11<Caret /></Select>
              <Slot $w={28}><GrowMark>A<GrowArrow /></GrowMark></Slot>
              <Slot $w={22}><GrowMark>A<GrowArrow $down /></GrowMark></Slot>
            </ToolRow>
            <ToolRow>
              <Slot $w={26}><FontMark>Ж</FontMark></Slot>
              <Slot $w={26}><FontMark $italic>К</FontMark></Slot>
              <Slot $w={24}><FontMark $under>Ч</FontMark></Slot>
              <Slot $w={16}><Caret /></Slot>
              <VRule $l={3} $r={3} />
              <Slot $w={28}><BorderIcon /></Slot>
              <Slot $w={10}><Caret /></Slot>
              <VRule $l={6} $r={6} />
              <Slot $w={22}><FillIcon /></Slot>
              <Slot $w={16}><Caret /></Slot>
              <Slot $w={24}><ColorMark $bar="#ff0000">A</ColorMark></Slot>
              <Slot $w={14}><Caret /></Slot>
            </ToolRow>
          </ToolStack>
        </GroupBody>
        <GroupLabel $shift={-22}>Шрифт</GroupLabel>
        <Launcher />
      </Group>

      <Group $w={445}>
        <GroupBody>
          <ToolStack>
            <ToolRow>
              <Slot $w={30}><Lines rows={[[0, 18, 4], [1, 17, 7], [0, 18, 10]]} /></Slot>
              <Slot $w={26}><Lines rows={[[0, 18, 5], [1, 17, 8], [0, 18, 11], [2, 16, 14]]} /></Slot>
              <Slot $w={26} $on><Lines rows={[[1, 17, 8], [0, 18, 11], [1, 17, 14], [0, 18, 17]]} /></Slot>
              <VRule $l={4} $r={3} />
              <Slot $w={26}><OrientIcon /></Slot>
              <Slot $w={10}><Caret /></Slot>
              <VRule $l={21} $r={7} />
              <Slot $w={20}><WrapIcon /></Slot>
              <TextTool $pad={3}>Перенести текст</TextTool>
            </ToolRow>
            <ToolRow>
              <Slot $w={30}><Lines rows={[[1, 17, 3], [1, 12, 6], [1, 17, 9], [1, 12, 12], [1, 17, 15]]} /></Slot>
              <Slot $w={26}><Lines rows={[[1, 17, 3], [4, 14, 6], [1, 17, 9], [4, 14, 12], [1, 17, 15]]} /></Slot>
              <Slot $w={26}><Lines rows={[[1, 17, 3], [6, 17, 6], [1, 17, 9], [6, 17, 12], [1, 17, 15]]} /></Slot>
              <VRule $l={4} $r={3} />
              <Slot $w={26}><IndentIcon /></Slot>
              <Slot $w={26}><IndentIcon flip /></Slot>
              <VRule $l={5} $r={0} />
              <Slot $w={27}><MergeIcon /></Slot>
              <TextTool $pad={3}>
                Объединить и поместить в центре
                <Slot $w={20}><Caret /></Slot>
              </TextTool>
            </ToolRow>
          </ToolStack>
        </GroupBody>
        <GroupLabel $shift={-20}>Выравнивание</GroupLabel>
        <Launcher />
      </Group>

      <Group $w={161}>
        <GroupBody $pad={4}>
          <ToolStack>
            <ToolRow><Select $w={152}>Общий<Caret /></Select></ToolRow>
            <ToolRow>
              <Slot $w={26}><CurrencyIcon /></Slot>
              <Slot $w={12}><Caret /></Slot>
              <Slot $w={26}><PercentMark>%</PercentMark></Slot>
              <Slot $w={22}><ThousandsMark>000</ThousandsMark></Slot>
              <VRule $l={9} $r={4} />
              <Slot $w={26}><DecimalIcon /></Slot>
              <Slot $w={26}><DecimalIcon more /></Slot>
            </ToolRow>
          </ToolStack>
        </GroupBody>
        <GroupLabel $shift={-20}>Число</GroupLabel>
        <Launcher />
      </Group>

      <Group $w={316}>
        <GroupBody>
          <BigButton $w={141}>
            <BigIcon><CondIcon /></BigIcon>
            <BigLine>Условное</BigLine>
            <BigLine>форматирование<Caret /></BigLine>
          </BigButton>
          <BigButton $w={114}>
            <BigIcon><TableBrushIcon /></BigIcon>
            <BigLine>Форматировать</BigLine>
            <BigLine>как таблицу<Caret /></BigLine>
          </BigButton>
          <BigButton $w={58}>
            <BigIcon><TableBrushIcon cells /></BigIcon>
            <BigLine>Стили</BigLine>
            <BigLine>ячеек<Caret /></BigLine>
          </BigButton>
        </GroupBody>
        <GroupLabel>Стили</GroupLabel>
      </Group>

      <Group $w={195}>
        <GroupBody $pad={6}>
          <BigButton $w={64}>
            <BigIcon><InsertIcon /></BigIcon>
            <BigLine>Вставить</BigLine>
            <BigLine><Caret /></BigLine>
          </BigButton>
          <BigButton $w={60}>
            <BigIcon><DeleteIcon /></BigIcon>
            <BigLine>Удалить</BigLine>
            <BigLine><Caret /></BigLine>
          </BigButton>
          <BigButton $w={60}>
            <BigIcon><FormatIcon /></BigIcon>
            <BigLine>Формат</BigLine>
            <BigLine><Caret /></BigLine>
          </BigButton>
        </GroupBody>
        <GroupLabel>Ячейки</GroupLabel>
      </Group>

      <Group $w={302}>
        <GroupBody>
          <EditColumn>
            <EditRow><EditIcon><SigmaIcon /></EditIcon>Автосумма<Caret $left={6} /></EditRow>
            <EditRow><EditIcon><FillDownIcon /></EditIcon>Заполнить<Caret /></EditRow>
            <EditRow><EditIcon><EraserIcon /></EditIcon>Очистить<Caret /></EditRow>
          </EditColumn>
          <BigButton $w={90}>
            <BigIcon><SortIcon /></BigIcon>
            <BigLine>Сортировка</BigLine>
            <BigLine>и фильтр<Caret /></BigLine>
          </BigButton>
          <BigButton $w={81} $on>
            <BigIcon><Magnifier size={37} /></BigIcon>
            <BigLine>Найти и</BigLine>
            <BigLine>выделить<Caret $dark /></BigLine>
          </BigButton>
        </GroupBody>
        <GroupLabel>Редактирование</GroupLabel>
      </Group>
    </Ribbon>

    <FormulaBar>
      <NameBox>B7<Caret /></NameBox>
      <GripDots><span /><span /><span /></GripDots>
      <FormulaButtons>
        <CrossIcon />
        <CheckIcon />
        <FxMark>fx</FxMark>
      </FormulaButtons>
      <FormulaInput>=B2+МАКС(A7;B6)</FormulaInput>
    </FormulaBar>

    <BookBar>
      <BookTab>
        <ExcelMark />
        18.xlsx *
        <BookClose>×</BookClose>
      </BookTab>
      <NewBook />
    </BookBar>

    <SheetArea>
      <GridViewport>
        <SheetGrid>
          <Corner />
          {columns.map((c, i) => <ColHead key={c} $on={i >= 1 && i <= 3}>{c}</ColHead>)}
          {Array.from({ length: 20 }, (_, r) => (
            <React.Fragment key={r}>
              <RowHead $on={r >= 6 && r <= 8}>{r + 1}</RowHead>
              {columns.map((c, i) => (
                <Cell key={c} $fill={r >= 6 && r <= 8 && i >= 1 && i <= 3 && !(r === 6 && i === 1)}>
                  {sheetData[r]?.[i]}
                </Cell>
              ))}
            </React.Fragment>
          ))}
        </SheetGrid>
        <Selection />
      </GridViewport>
      <VScroll>
        <VThumb />
        <VTrack />
        <VButton><Caret /></VButton>
      </VScroll>
    </SheetArea>

    <SheetBar>
      <NavArrows><NavArrow /><NavArrow $right /></NavArrows>
      <SheetTab>Лист1</SheetTab>
      <SheetTab $active>Лист2</SheetTab>
      <AddSheet><AddIcon /></AddSheet>
      <ScrollDots><span /><span /><span /></ScrollDots>
      <HScroll>
        <HButton><ScrollArrow /></HButton>
        <HThumb />
        <HButton $end><ScrollArrow $right /></HButton>
      </HScroll>
    </SheetBar>

    <StatusBar>
      <StatusText>Готово</StatusText>
      <StatusStats>
        <span>Среднее: 25</span>
        <span>Количество: 9</span>
        <span>Сумма: 225</span>
      </StatusStats>
      <StatusRight>
        <ViewButton $on><NormalViewIcon /></ViewButton>
        <ViewButton><PageViewIcon /></ViewButton>
        <ViewButton><BreakViewIcon /></ViewButton>
        <ZoomSign>−</ZoomSign>
        <ZoomTrack>
          <ZoomMark $x={58} />
          <ZoomMark $x={67} $thumb />
        </ZoomTrack>
        <ZoomSign>+</ZoomSign>
        <ZoomValue>145%</ZoomValue>
      </StatusRight>
    </StatusBar>

    <FindMenu>
      <MenuRow><MenuIcon><Magnifier size={20} /></MenuIcon><span><Key>Н</Key>айти...</span></MenuRow>
      <MenuRow $on><MenuIcon><ReplaceIcon /></MenuIcon><span><Key>З</Key>аменить...</span></MenuRow>
      <MenuRow><MenuIcon /><span><Key>П</Key>ерейти...</span></MenuRow>
      <MenuRow><MenuIcon /><span>В<Key>ы</Key>делить группу ячеек...</span></MenuRow>
      <MenuRow><MenuIcon /><span><Key>Ф</Key>ормулы</span></MenuRow>
      <MenuRow><MenuIcon /><span>Пр<Key>и</Key>мечания</span></MenuRow>
      <MenuRow><MenuIcon /><span><Key>У</Key>словное форматирование</span></MenuRow>
      <MenuRow><MenuIcon /><span><Key>К</Key>онстанты</span></MenuRow>
      <MenuRow><MenuIcon /><span>Про<Key>в</Key>ерка данных</span></MenuRow>
      <MenuRule />
      <MenuRow><MenuIcon><PointerIcon /></MenuIcon><span>Выбор объек<Key>т</Key>ов</span></MenuRow>
      <MenuRow><MenuIcon><PaneIcon /></MenuIcon><span>О<Key>б</Key>ласть выделения...</span></MenuRow>
    </FindMenu>

    <Hint>
      <HintTitle>Заменить (Ctrl+H)</HintTitle>
      <HintLine>Поиск текста, который нужно</HintLine>
      <HintLine>заменить, и вставка вместо</HintLine>
      <HintLine>него другого.</HintLine>
    </Hint>
  </Window>
);

export default App;
